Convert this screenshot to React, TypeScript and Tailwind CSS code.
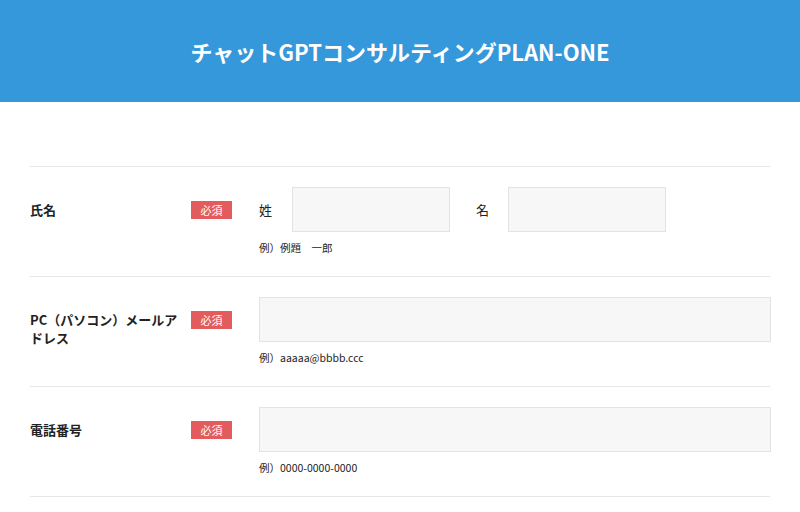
const font = "font-['Noto_Sans_CJK_JP','Noto_Sans',sans-serif]";

const Required = () => (
  <span className="flex h-[18px] w-[41px] shrink-0 items-center justify-center bg-[#e35b5c] text-[11px] leading-none text-white">
    必須
  </span>
);

const Example = ({ children }: { children: React.ReactNode }) => (
  <p className="mt-[7px] h-[17px] text-[10.5px] leading-[17px] text-[#222]">{children}</p>
);

const TextBox = ({ className }: { className?: string }) => (
  <input
    type="text"
    className={`h-[45px] border border-[#e3e3e3] bg-[#f7f7f7] px-3 text-sm outline-none ${className ?? ""}`}
  />
);

function Row({
  label,
  children,
}: {
  label: React.ReactNode;
  children: React.ReactNode;
}) {
  return (
    <div className="flex h-[110px] border-b border-[#e6e6e6]">
      <div className="flex w-[229px] shrink-0 items-start justify-between pt-[34px] pr-[27px]">
        <span className="w-[155px] text-[13px] font-bold leading-[18px] text-[#222]">{label}</span>
        <Required />
      </div>
      <div className="-mr-px flex-1 pt-5">{children}</div>
    </div>
  );
}

export default function App() {
  return (
    <div className={`min-h-screen bg-white ${font}`}>
      {/* Header */}
      <header className="flex h-[102px] items-center justify-center bg-[#3498db]">
        <h1 className="text-[22px] font-bold text-white">
          チャットGPTコンサルティングPLAN-ONE
        </h1>
      </header>

      {/* Form */}
      <main className="mx-[30px] pt-16">
        <div className="border-t border-[#e6e6e6]">
          <Row label="氏名">
            <div className="flex items-center">
              <span className="w-[33px] text-[13px] text-[#222]">姓</span>
              <TextBox className="w-[158px]" />
              <span className="ml-[26px] w-[32px] text-[13px] text-[#222]">名</span>
              <TextBox className="w-[158px]" />
            </div>
            <Example>例）例題　一郎</Example>
          </Row>

          <Row label="PC（パソコン）メールアドレス">
            <TextBox className="w-full" />
            <Example>例）aaaaa@bbbb.ccc</Example>
          </Row>

          <Row label="電話番号">
            <TextBox className="w-full" />
            <Example>例）0000-0000-0000</Example>
          </Row>
        </div>
      </main>
    </div>
  );
}
